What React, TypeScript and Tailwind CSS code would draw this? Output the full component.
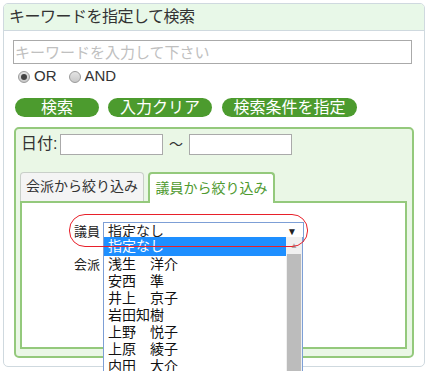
import React from "react";

const members = [
  "浅生　洋介",
  "安西　準",
  "井上　京子",
  "岩田知樹",
  "上野　悦子",
  "上原　綾子",
  "内田　大介",
];

function Radio({ checked }: { checked: boolean }) {
  return (
    <span className="w-[12px] h-[12px] rounded-full border border-[#9a9a9a] bg-gradient-to-b from-[#e4e4e4] to-[#c8c8c8] flex items-center justify-center">
      {checked && <span className="w-[6px] h-[6px] rounded-full bg-[#444]" />}
    </span>
  );
}

function GreenButton({ label, width }: { label: string; width: string }) {
  return (
    <button
      className={`${width} h-[19px] rounded-full bg-[#4c9b2e] text-white text-[16px] leading-[19px] flex items-center justify-center`}
    >
      {label}
    </button>
  );
}

export default function App() {
  return (
    <div
      className="w-[429px] h-[371px] bg-white p-[3px] relative overflow-hidden text-[#222]"
      style={{ fontFamily: '"Liberation Sans", "Noto Sans CJK JP", sans-serif' }}
    >
      <div className="w-[422px] h-[364px] border border-[#cfd9df] rounded-[5px] overflow-hidden">
        {/* header */}
        <div className="h-[27px] bg-[#e8f8e8] border-b border-[#cfd9df] px-[5px] flex items-center text-[16px] text-[#333] tracking-[-0.5px]">
          キーワードを指定して検索
        </div>

        <div className="px-[9px] pt-[9px]">
          <input
            type="text"
            placeholder="キーワードを入力して下さい"
            className="w-[399px] h-[24px] border border-[#aaaaaa] px-[1px] text-[15px] placeholder:text-[#c0c0c0] outline-none"
          />

          <div className="mt-[3px] h-[18px] flex items-center pl-[5px] text-[15px] text-[#333]">
            <Radio checked />
            <span className="ml-[4px]">OR</span>
            <span className="ml-[12px]"><Radio checked={false} /></span>
            <span className="ml-[4px]">AND</span>
          </div>

          <div className="mt-[12px] flex items-center pl-[2px] gap-[9px]">
            <GreenButton label="検索" width="w-[84px]" />
            <GreenButton label="入力クリア" width="w-[104px]" />
            <span className="ml-[1px]">
              <GreenButton label="検索条件を指定" width="w-[135px]" />
            </span>
          </div>

          {/* condition box */}
          <div className="mt-[10px] ml-[1px] w-[400px] h-[231px] border-2 border-[#94c97c] rounded-[5px] bg-[#eaf7e6] pt-[5px] pl-[4px] pr-[5px]">
            <div className="flex items-center h-[21px] text-[16px] text-[#333]">
              <span className="ml-[1px] w-[39px]">日付:</span>
              <input className="w-[103px] h-[21px] border border-[#aaaaaa] bg-white" />
              <span className="mx-[6px] text-[14px]">〜</span>
              <input className="w-[103px] h-[21px] border border-[#aaaaaa] bg-white" />
            </div>

            {/* tabs */}
            <div className="mt-[16px] flex items-end h-[30px]">
              <div className="w-[124px] h-[29px] bg-[#f4f4f4] border border-b-0 border-[#c9cfc9] rounded-t-[4px] flex items-center justify-center text-[14px] text-[#333]">
                会派から絞り込み
              </div>
              <div className="ml-[4px] w-[127px] h-[31px] bg-white border-2 border-b-0 border-[#94c97c] rounded-t-[4px] flex items-center justify-center text-[14px] text-[#4f9a30] relative z-10 -mb-[2px]">
                議員から絞り込み
              </div>
            </div>
            <div className="w-[387px] h-[148px] bg-white border-2 border-[#94c97c] pt-[19px] pl-[52px] text-[13px]">
              <div className="flex items-center h-[20px]">
                <span className="w-[29px]">議員</span>
                <div className="w-[201px] h-[20px] border border-[#7d9fd6] bg-white flex items-center justify-between pl-[4px] pr-[6px] text-[14px]">
                  <span>指定なし</span>
                  <span className="text-[10px]">▼</span>
                </div>
              </div>
              <div className="mt-[15px] flex items-center h-[17px]">
                <span className="w-[29px]">会派</span>
              </div>
            </div>
          </div>
        </div>
      </div>

      {/* red annotation */}
      <div className="absolute left-[69px] top-[214px] w-[239px] h-[33px] border border-[#e8202a] rounded-[16px] pointer-events-none z-30" />

      {/* dropdown list */}
      <div className="absolute left-[103px] top-[237px] w-[200px] h-[140px] bg-white border-l border-r border-[#7d9fd6] z-20 flex">
        <div className="flex-1 text-[14px] text-[#111]">
          <div className="h-[19px] bg-[#1e8fff] text-white pl-[4px] leading-[19px]">指定なし</div>
          {members.map((m) => (
            <div key={m} className="h-[17px] pl-[4px] leading-[17px]">
              {m}
            </div>
          ))}
        </div>
        <div className="w-[16px] bg-[#f0f0f0] flex flex-col">
          <div className="h-[17px] flex items-center justify-center text-[8px] text-[#a8a8a8]">▲</div>
          <div className="mx-[1px] flex-1 bg-[#bcbcbc]" />
        </div>
      </div>
    </div>
  );
}
